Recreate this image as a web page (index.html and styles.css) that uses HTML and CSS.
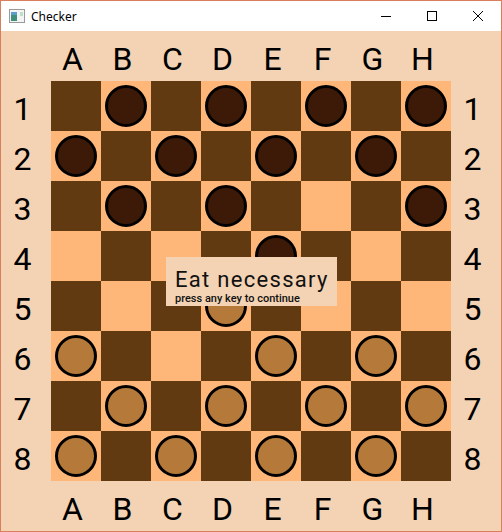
FILE: index.html
```html
<!DOCTYPE html>
<html>
    <head>
        <link rel="stylesheet" href="styles.css">
    </head>
    <body>
        <div id="window">
            <div id="titlebar">
                <svg class="app-icon" width="16" height="14" viewBox="0 0 16 14">
                    <rect x="0.5" y="0.5" width="15" height="13" fill="#f4f4f4" stroke="#9a9a9a"/>
                    <rect x="2" y="3" width="6" height="9" fill="#3f8f7a"/>
                    <rect x="2" y="3" width="6" height="3" fill="#5a9fc8"/>
                    <rect x="11" y="3" width="3" height="4" fill="#bfe0c8"/>
                </svg>
                <span class="title">Checker</span>
                <div class="controls">
                    <div class="ctl">
                        <svg width="10" height="10" viewBox="0 0 10 10"><path d="M0 5.5H10" stroke="#000" stroke-width="1"/></svg>
                    </div>
                    <div class="ctl">
                        <svg width="10" height="10" viewBox="0 0 10 10"><rect x="0.5" y="0.5" width="9" height="9" fill="none" stroke="#000"/></svg>
                    </div>
                    <div class="ctl">
                        <svg width="10" height="10" viewBox="0 0 10 10"><path d="M0 0L10 10M10 0L0 10" stroke="#000" stroke-width="1"/></svg>
                    </div>
                </div>
            </div>

            <div id="content">
                <div id="grid">
                    <div></div>
                    <div class="label">A</div><div class="label">B</div><div class="label">C</div><div class="label">D</div>
                    <div class="label">E</div><div class="label">F</div><div class="label">G</div><div class="label">H</div>
                    <div></div>

                    <div class="label">1</div>
                    <div class="sq dark"></div><div class="sq light"><span class="piece black"></span></div>
                    <div class="sq dark"></div><div class="sq light"><span class="piece black"></span></div>
                    <div class="sq dark"></div><div class="sq light"><span class="piece black"></span></div>
                    <div class="sq dark"></div><div class="sq light"><span class="piece black"></span></div>
                    <div class="label">1</div>

                    <div class="label">2</div>
                    <div class="sq light"><span class="piece black"></span></div><div class="sq dark"></div>
                    <div class="sq light"><span class="piece black"></span></div><div class="sq dark"></div>
                    <div class="sq light"><span class="piece black"></span></div><div class="sq dark"></div>
                    <div class="sq light"><span class="piece black"></span></div><div class="sq dark"></div>
                    <div class="label">2</div>

                    <div class="label">3</div>
                    <div class="sq dark"></div><div class="sq light"><span class="piece black"></span></div>
                    <div class="sq dark"></div><div class="sq light"><span class="piece black"></span></div>
                    <div class="sq dark"></div><div class="sq light"></div>
                    <div class="sq dark"></div><div class="sq light"><span class="piece black"></span></div>
                    <div class="label">3</div>

                    <div class="label">4</div>
                    <div class="sq light"></div><div class="sq dark"></div>
                    <div class="sq light"></div><div class="sq dark"></div>
                    <div class="sq light"><span class="piece black"></span></div><div class="sq dark"></div>
                    <div class="sq light"></div><div class="sq dark"></div>
                    <div class="label">4</div>

                    <div class="label">5</div>
                    <div class="sq dark"></div><div class="sq light"></div>
                    <div class="sq dark"></div><div class="sq light"><span class="piece white"></span></div>
                    <div class="sq dark"></div><div class="sq light"></div>
                    <div class="sq dark"></div><div class="sq light"></div>
                    <div class="label">5</div>

                    <div class="label">6</div>
                    <div class="sq light"><span class="piece white"></span></div><div class="sq dark"></div>
                    <div class="sq light"></div><div class="sq dark"></div>
                    <div class="sq light"><span class="piece white"></span></div><div class="sq dark"></div>
                    <div class="sq light"><span class="piece white"></span></div><div class="sq dark"></div>
                    <div class="label">6</div>

                    <div class="label">7</div>
                    <div class="sq dark"></div><div class="sq light"><span class="piece white"></span></div>
                    <div class="sq dark"></div><div class="sq light"><span class="piece white"></span></div>
                    <div class="sq dark"></div><div class="sq light"><span class="piece white"></span></div>
                    <div class="sq dark"></div><div class="sq light"><span class="piece white"></span></div>
                    <div class="label">7</div>

                    <div class="label">8</div>
                    <div class="sq light"><span class="piece white"></span></div><div class="sq dark"></div>
                    <div class="sq light"><span class="piece white"></span></div><div class="sq dark"></div>
                    <div class="sq light"><span class="piece white"></span></div><div class="sq dark"></div>
                    <div class="sq light"><span class="piece white"></span></div><div class="sq dark"></div>
                    <div class="label">8</div>

                    <div></div>
                    <div class="label">A</div><div class="label">B</div><div class="label">C</div><div class="label">D</div>
                    <div class="label">E</div><div class="label">F</div><div class="label">G</div><div class="label">H</div>
                    <div></div>
                </div>

                <div id="message">
                    <div class="msg-title">Eat necessary</div>
                    <div class="msg-sub">press any key to continue</div>
                </div>
            </div>
        </div>
    </body>
</html>
```

FILE: styles.css
```css
* {
    box-sizing: border-box;
}
body {
    margin: 0;
    background-color: white;
}
#window {
    width: 502px;
    height: 532px;
    border: 1px solid #d97f5c;
    display: flex;
    flex-direction: column;
}
#titlebar {
    height: 30px;
    background-color: white;
    display: flex;
    align-items: center;
    padding-left: 8px;
}
.title {
    font-family: "Noto Sans", sans-serif;
    font-size: 12px;
    margin-left: 6px;
    color: #000;
}
.controls {
    margin-left: auto;
    display: flex;
    height: 100%;
}
.ctl {
    width: 46px;
    display: flex;
    align-items: center;
    justify-content: center;
}
#content {
    position: relative;
    flex: 1;
    background-color: #f3d3b3;
}
#grid {
    display: grid;
    grid-template-columns: repeat(10, 50px);
    grid-template-rows: repeat(10, 50px);
}
.label {
    display: flex;
    align-items: center;
    justify-content: center;
    padding: 6px 7px 0 0;
    font-family: Roboto, sans-serif;
    font-size: 32px;
    color: #000;
}
.sq {
    display: flex;
    align-items: center;
    justify-content: center;
}
.dark {
    background-color: #623a12;
}
.light {
    background-color: #ffb679;
}
.piece {
    width: 42px;
    height: 42px;
    border-radius: 50%;
    border: 3px solid #000;
}
.black {
    background-color: #3d1a08;
}
.white {
    background-color: #b57a3a;
}
#message {
    position: absolute;
    left: 165px;
    top: 226px;
    width: 171px;
    height: 49px;
    background-color: #f3d3b3;
    padding: 10px 0 0 9px;
    font-family: Roboto, sans-serif;
    color: #111;
}
.msg-title {
    font-size: 22px;
    line-height: 26px;
    letter-spacing: 1.3px;
}
.msg-sub {
    font-size: 11px;
    line-height: 11px;
    font-weight: 500;
}
```
